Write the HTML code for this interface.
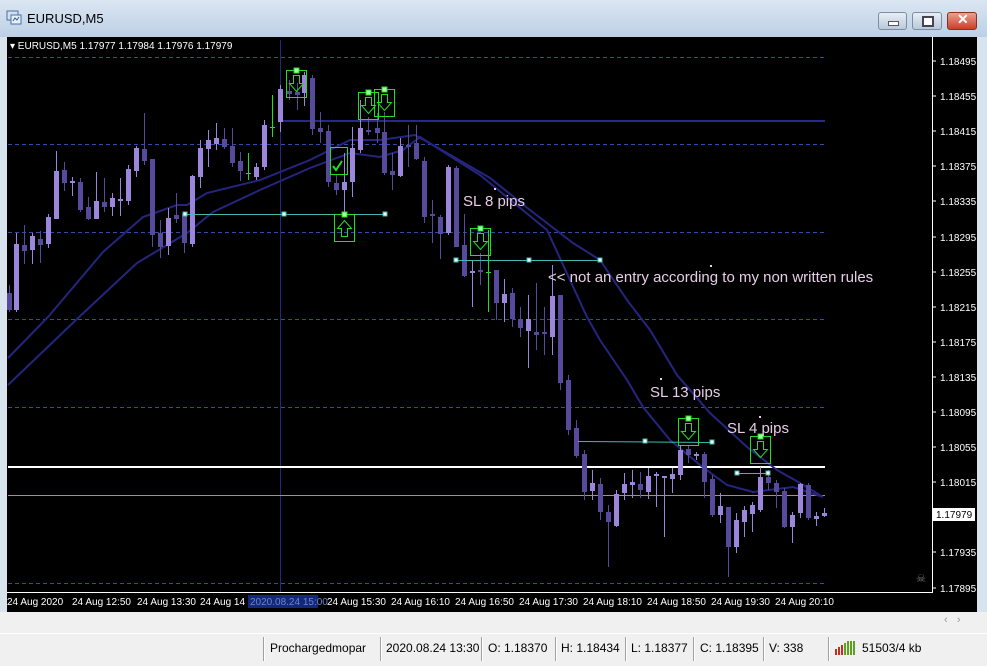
<!DOCTYPE html>
<html><head><meta charset="utf-8"><style>
html,body{margin:0;padding:0;width:987px;height:665px;overflow:hidden;background:#d9e3ee;font-family:"Liberation Sans",sans-serif}
#title{position:absolute;left:0;top:0;width:987px;height:37px;background:linear-gradient(#dbe6f2,#bcd0e6)}
#title span{position:absolute;left:27px;top:11px;font-size:13px;color:#000}
.btn{position:absolute;top:12px;height:16px;border:1px solid #7d8ea4;border-radius:3px;background:linear-gradient(#e8eef6,#b9c8da)}
#chart{position:absolute;left:7px;top:37px;width:970px;height:575px;background:#000}
#bot{position:absolute;left:0;top:612px;width:987px;height:21px;background:#f0f0f0}
#status{position:absolute;left:0;top:633px;width:987px;height:32px;background:#f0f0f0;border-top:1px solid #fff}
#status span{position:absolute;top:7px;font-size:12px;color:#000}
.sep{position:absolute;top:3px;width:1px;height:24px;background:#a0a0a0;border-right:1px solid #fff}
svg text{font-family:"Liberation Sans",sans-serif}
</style></head><body>
<div id="title"><svg style="position:absolute;left:6px;top:9px" width="16" height="16"><rect x="1" y="2" width="11" height="9" fill="#cfe0f3" stroke="#4a6fa0"/><rect x="5" y="6" width="10" height="9" fill="#e6f0fa" stroke="#4a6fa0"/><path d="M7 12l2-3 2 2 2-3" stroke="#2a5a9a" fill="none"/></svg><span>EURUSD,M5</span>
<div class="btn" style="left:878px;width:27px"><div style="position:absolute;left:9px;top:8px;width:9px;height:3px;background:#fff;border:1px solid #556"></div></div>
<div class="btn" style="left:912px;width:28px"><div style="position:absolute;left:9px;top:3px;width:8px;height:7px;border:2px solid #445;background:#fff"></div></div>
<div class="btn" style="left:947px;width:28px;background:linear-gradient(#e9a090,#c8402a);border-color:#8a3020"><span style="position:absolute;left:9px;top:-2px;color:#fff;font-weight:bold;font-size:14px">✕</span></div>
</div>
<div id="chart"></div>
<svg id="s" style="position:absolute;left:0;top:0" width="987" height="665">
<g stroke="#2b4ea8" stroke-dasharray="4,3" stroke-width="1">
<line x1="8" y1="57.5" x2="825" y2="57.5"/><line x1="8" y1="144.5" x2="825" y2="144.5"/><line x1="8" y1="232.5" x2="825" y2="232.5"/><line x1="8" y1="319.5" x2="825" y2="319.5"/><line x1="8" y1="407.5" x2="825" y2="407.5"/><line x1="8" y1="583.5" x2="825" y2="583.5"/>
</g>
<line x1="280.5" y1="40" x2="280.5" y2="592" stroke="#1c2a80"/>
<line x1="282" y1="121" x2="825" y2="121" stroke="#26288a" stroke-width="2"/>
<line x1="8" y1="467" x2="825" y2="467" stroke="#fff" stroke-width="2"/>
<line x1="8" y1="495.5" x2="825" y2="495.5" stroke="#b88c66"/>
<polyline fill="none" stroke="#25257f" stroke-width="2" points="8,358 48,317 103,252 143,217 177,205 187,205 207,193 260,180 310,160 350,140 380,140 415,135 447,153 490,178 530,210 573,243 600,260 627,300 650,330 677,375 710,413 747,447 777,470 800,483 823,497"/>
<polyline fill="none" stroke="#25257f" stroke-width="2" points="8,385 78,318 137,263 187,233 213,212 260,190 310,168 350,153 380,157 403,150 420,137 480,175 547,230 587,317 600,340 627,380 643,407 670,440 700,465 727,485 753,492 793,487 823,497"/>
<g id="cd"></g>
<g stroke="#40b8b0" fill="#fff">
<line x1="185" y1="214.5" x2="385" y2="214.5"/><line x1="456" y1="260.5" x2="600" y2="260.5"/><line x1="578" y1="441.5" x2="712" y2="442.5"/><line x1="737" y1="473.5" x2="768" y2="473.5"/>
<rect x="183" y="212" width="4" height="4"/><rect x="282" y="212" width="4" height="4"/><rect x="383" y="212" width="4" height="4"/>
<rect x="454" y="258" width="4" height="4"/><rect x="527" y="258" width="4" height="4"/><rect x="598" y="258" width="4" height="4"/>
<rect x="643" y="439" width="4" height="4"/><rect x="710" y="440" width="4" height="4"/><rect x="735" y="471" width="4" height="4"/><rect x="766" y="471" width="4" height="4"/>
</g>
<g stroke="#22dd22" fill="none" stroke-width="1">
<line x1="248.5" y1="153" x2="248.5" y2="180"/><line x1="246" y1="173.5" x2="251" y2="173.5"/>
<line x1="272.5" y1="95" x2="272.5" y2="137"/><line x1="270" y1="127.5" x2="275" y2="127.5"/>
<line x1="488.5" y1="230" x2="488.5" y2="312"/><line x1="486" y1="272.5" x2="491" y2="272.5"/>
<rect x="286.5" y="70.5" width="20" height="27"/><rect x="358.5" y="92.5" width="20" height="27"/><rect x="374.5" y="89.5" width="20" height="27"/><rect x="330.5" y="147.5" width="17" height="27"/><rect x="334.5" y="214.5" width="20" height="27"/><rect x="470.5" y="228.5" width="20" height="27"/><rect x="678.5" y="418.5" width="20" height="27"/><rect x="750.5" y="436.5" width="20" height="27"/>
<path d="M333 166l3 4 6-9" stroke-width="2"/>
</g>
<g id="ar"></g>
<g fill="#e8cce8" font-size="15">
<text x="463" y="206">SL 8 pips</text><text x="548" y="282">&lt;&lt; not an entry according to my non written rules</text><text x="650" y="397">SL 13 pips</text><text x="727" y="433">SL 4 pips</text>
</g>
<g fill="#e8cce8"><rect x="494" y="188" width="2" height="2"/><rect x="710" y="265" width="2" height="2"/><rect x="660" y="378" width="2" height="2"/><rect x="759" y="416" width="2" height="2"/></g>
<path d="M932.5 37V592.5H7" stroke="#fff" fill="none"/>
<g fill="#fff" font-size="10" id="px"></g>
<rect x="933" y="508" width="42" height="13" fill="#fff"/><text x="936" y="518" font-size="10" fill="#000">1.17979</text>
<text x="10" y="49" font-size="10" fill="#fff">▾ EURUSD,M5  1.17977 1.17984 1.17976 1.17979</text>
<text x="916" y="582" font-size="11" fill="#777">☠</text>
<g fill="#fff" font-size="10" id="tm">
<text x="7" y="605">24 Aug 2020</text><text x="72" y="605">24 Aug 12:50</text><text x="137" y="605">24 Aug 13:30</text><text x="200" y="605">24 Aug 14</text>
<rect x="248" y="595" width="70" height="13" fill="#14287a"/><text x="250" y="605" fill="#6a84c8">2020.08.24 15:00</text>
<text x="327" y="605">24 Aug 15:30</text><text x="391" y="605">24 Aug 16:10</text><text x="455" y="605">24 Aug 16:50</text><text x="519" y="605">24 Aug 17:30</text><text x="583" y="605">24 Aug 18:10</text><text x="647" y="605">24 Aug 18:50</text><text x="711" y="605">24 Aug 19:30</text><text x="775" y="605">24 Aug 20:10</text>
</g>
</svg>
<div id="bot"><span style="position:absolute;left:944px;top:2px;font-size:11px;color:#999">‹ &nbsp; ›</span></div>
<div id="status">
<div class="sep" style="left:263px"></div><span style="left:270px">Prochargedmopar</span>
<div class="sep" style="left:380px"></div><span style="left:386px">2020.08.24 13:30</span>
<div class="sep" style="left:481px"></div><span style="left:488px">O: 1.18370</span>
<div class="sep" style="left:555px"></div><span style="left:561px">H: 1.18434</span>
<div class="sep" style="left:625px"></div><span style="left:631px">L: 1.18377</span>
<div class="sep" style="left:693px"></div><span style="left:700px">C: 1.18395</span>
<div class="sep" style="left:763px"></div><span style="left:769px">V: 338</span>
<div class="sep" style="left:828px"></div>
<svg style="position:absolute;left:835px;top:7px" width="22" height="14"><g stroke-width="2"><line x1="1" y1="14" x2="1" y2="8" stroke="#c03020"/><line x1="4" y1="14" x2="4" y2="6" stroke="#c03020"/><line x1="7" y1="14" x2="7" y2="4" stroke="#c03020"/><line x1="10" y1="14" x2="10" y2="2" stroke="#60a020"/><line x1="13" y1="14" x2="13" y2="0" stroke="#60a020"/><line x1="16" y1="14" x2="16" y2="0" stroke="#60a020"/><line x1="19" y1="14" x2="19" y2="0" stroke="#60a020"/></g></svg>
<span style="left:862px">51503/4 kb</span>
</div>
<script>
var L="#9b86db",D="#564a9c";
var c=[[9,285,312,293,310,D],[16,233,312,244,310,L],[24,225,264,245,251,D],[32,233,264,236,250,L],[40,231,263,239,245,D],[48,214,248,217,244,L],[56,151,219,171,219,L],[64,162,191,170,183,D],[72,177,196,181,183,L],[80,178,212,182,210,D],[88,197,220,207,219,D],[96,172,218,201,219,L],[104,178,212,202,207,D],[112,193,216,198,207,L],[120,178,216,199,201,L],[128,165,205,169,201,L],[136,146,177,148,171,L],[144,113,165,149,161,D],[152,159,247,159,235,D],[160,220,258,233,247,D],[168,208,255,218,246,L],[176,193,223,215,219,D],[184,214,253,214,243,D],[192,175,247,176,244,L],[200,140,188,148,177,L],[208,130,167,140,149,L],[216,123,150,138,144,L],[224,128,149,139,147,D],[232,128,167,146,163,D],[240,152,181,161,171,D],[256,163,180,167,177,L],[264,120,170,125,167,L],[280,85,132,89,122,L],[289,80,100,91,94,D],[297,83,110,92,95,D],[304,72,106,75,93,L],[312,75,135,78,129,D],[320,112,143,128,132,D],[328,125,187,131,182,D],[336,175,195,183,190,D],[344,153,212,182,190,L],[352,127,197,148,182,L],[360,100,153,128,150,L],[368,117,135,130,132,D],[377,113,143,128,133,D],[384,112,175,132,173,D],[392,153,190,171,175,D],[400,138,177,146,176,L],[408,125,167,145,147,D],[416,125,160,143,159,D],[424,157,223,161,217,D],[432,200,243,214,216,D],[440,215,259,217,234,D],[448,165,235,167,233,L],[456,166,247,168,247,D],[464,214,277,245,276,D],[472,260,307,271,273,L],[480,253,285,270,272,D],[496,270,320,270,303,D],[504,279,322,294,303,L],[512,288,327,293,319,D],[520,307,337,319,328,D],[528,295,368,319,331,L],[536,283,350,332,335,D],[544,307,355,332,334,D],[552,265,355,296,337,L],[560,295,390,295,383,D],[568,375,435,380,430,D],[576,420,458,428,456,D],[584,450,500,454,492,D],[592,470,500,483,491,L],[600,478,520,484,512,D],[608,505,567,512,522,D],[616,490,527,494,526,L],[624,473,500,484,493,L],[632,470,498,482,485,L],[640,472,498,484,490,D],[648,468,499,476,492,L],[656,472,507,474,476,L],[664,477,537,476,478,L],[672,468,493,474,479,L],[680,445,480,450,475,L],[688,445,463,449,455,D],[696,452,460,454,456,L],[704,452,498,454,482,D],[712,475,517,479,515,D],[720,493,523,506,515,L],[728,507,577,507,547,D],[736,513,553,520,547,L],[744,506,537,510,522,L],[752,502,532,505,514,L],[760,467,512,477,510,L],[768,470,490,477,483,D],[776,480,508,483,492,D],[784,488,528,491,527,D],[792,512,543,515,527,L],[800,483,518,484,513,L],[808,483,520,485,518,D],[816,512,526,516,519,L],[824,508,517,513,516,L]];
var h="";c.forEach(function(a){h+='<rect x="'+a[0]+'" y="'+a[1]+'" width="1" height="'+(a[2]-a[1])+'" fill="'+a[5]+'"/><rect x="'+(a[0]-2)+'" y="'+a[3]+'" width="5" height="'+Math.max(2,a[4]-a[3])+'" fill="'+a[5]+'"/>';});
document.getElementById("cd").innerHTML=h;
var b=[[296,70,1],[368,92,1],[384,89,1],[480,228,1],[688,418,1],[760,436,1],[344,214,0]];var g="";
b.forEach(function(q){var x=q[0]+0.5,y=q[1]+0.5;g+='<rect x="'+(x-2.5)+'" y="'+(y-2.5)+'" width="5" height="5" fill="#aaffaa" stroke="#22dd22"/>';
if(q[2])g+='<path d="M'+(x-3)+' '+(y+5)+'v8h-4l7 8 7-8h-4v-8z" fill="none" stroke="#22dd22"/>';else g+='<path d="M'+(x-3)+' '+(y+22)+'v-8h-4l7-8 7 8h-4v8z" fill="none" stroke="#22dd22"/>';});
document.getElementById("ar").innerHTML=g;
var p=["1.18495","1.18455","1.18415","1.18375","1.18335","1.18295","1.18255","1.18215","1.18175","1.18135","1.18095","1.18055","1.18015","","1.17935","1.17895"];var t="";
p.forEach(function(v,i){var y=Math.round(61+i*35.1);if(v)t+='<line x1="932" y1="'+y+'" x2="936" y2="'+y+'" stroke="#fff"/><text x="940" y="'+(y+4)+'">'+v+'</text>';});
document.getElementById("px").innerHTML=t;
</script>
</body></html>
